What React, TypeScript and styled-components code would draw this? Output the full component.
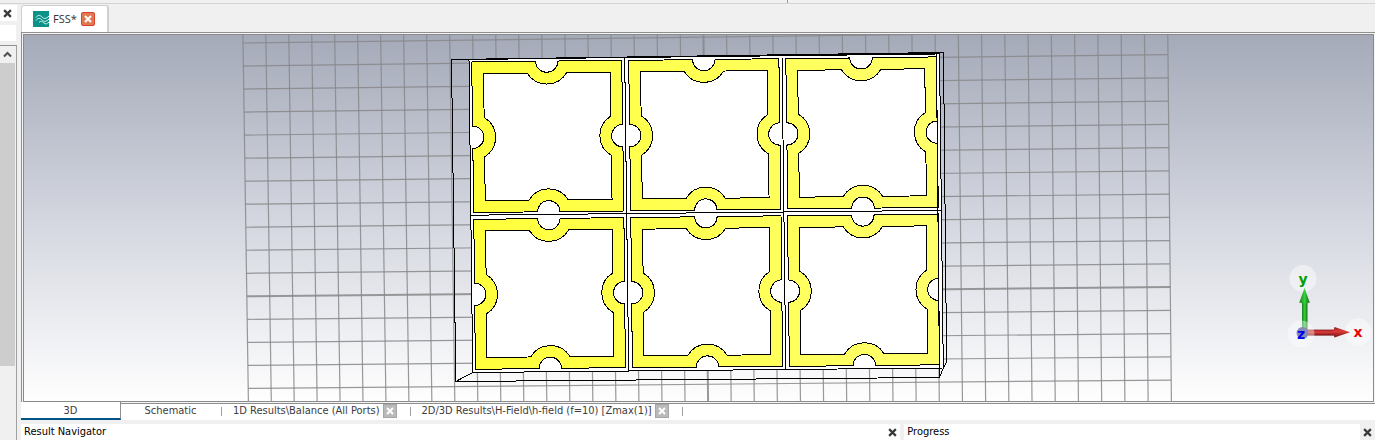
import React from "react";
import styled, { createGlobalStyle } from "styled-components";

const GlobalStyle = createGlobalStyle`
  *, *::before, *::after { box-sizing: border-box; }
  html, body, #root { margin: 0; height: 100%; }
  body {
    background: #f0f0f0;
    color: #000;
    font-family: "DejaVu Sans Condensed", "DejaVu Sans", sans-serif;
    font-size: 11px;
    line-height: 14px;
    overflow: hidden;
  }
  button { font: inherit; border: 0; padding: 0; margin: 0; background: none; color: inherit; }
  svg { display: block; }
`;

const Window = styled.div`
  display: flex;
  flex-direction: column;
  height: 100vh;
`;

const RibbonEdge = styled.div`
  height: 4px;
  flex: none;
  border-bottom: 1px solid #d4d4d4;
  display: flex;
  justify-content: center;
  padding-left: 200px;
`;

const SplitMark = styled.div`
  width: 1px;
  height: 3px;
  background: #a8a070;
`;

const Body = styled.div`
  flex: 1;
  min-height: 0;
  display: flex;
  gap: 4px;
`;

const Sidebar = styled.aside`
  width: 17px;
  flex: none;
  display: flex;
  flex-direction: column;
  padding-top: 1px;
  gap: 4px;
`;

const SidebarHead = styled.div`
  height: 16px;
  background: #fff;
  display: flex;
  align-items: center;
  justify-content: flex-end;
  padding-right: 3px;
`;

const SidebarField = styled.div`
  height: 16px;
  margin-right: 1px;
  background: #fff;
`;

const ScrollBox = styled.div`
  flex: 1;
  border-top: 1px solid #8f8f8f;
  border-right: 1px solid #a0a0a0;
  padding-right: 1px;
  display: flex;
  flex-direction: column;
`;

const ScrollButton = styled.button`
  height: 17px;
  display: flex;
  align-items: center;
  justify-content: center;
`;

const ScrollThumb = styled.div`
  height: 77%;
  background: #cdcdcd;
`;

const Main = styled.main`
  flex: 1;
  min-width: 0;
  display: flex;
  flex-direction: column;
`;

const DocTabs = styled.div`
  height: 28px;
  flex: none;
  display: flex;
  padding-top: 1px;
`;

const DocTab = styled.div`
  width: 88px;
  background: #fff;
  border: 1px solid #d0d0d0;
  border-right-width: 2px;
  border-bottom: 0;
  border-radius: 3px 3px 0 0;
  display: flex;
  align-items: center;
  padding-left: 11px;
  gap: 4px;
`;

const DocTitle = styled.span`
  width: 24px;
  font-family: "Noto Sans", sans-serif;
  font-size: 11px;
  color: #3c3c3c;
`;

const CloseBox = styled.button<{ $tone: "red" | "gray" }>`
  width: 14px;
  height: 14px;
  flex: none;
  display: flex;
  align-items: center;
  justify-content: center;
  color: #fff;
  border-radius: ${(p) => (p.$tone === "red" ? "2px" : "0")};
  border: 1px solid ${(p) => (p.$tone === "red" ? "#d8402c" : "#a6a6a6")};
  background: ${(p) => (p.$tone === "red" ? "#e07850" : "#bababa")};
`;

const ViewFrame = styled.section`
  flex: 1;
  min-height: 0;
  border: 1px solid #8f8f8f;
  border-right: 0;
  padding: 1px;
  background: #f4f4f4;
`;

const Viewport = styled.div`
  height: 100%;
  border: 1px solid #8a8a8a;
  background: linear-gradient(#a5aab9, #d3d6df 50%, #fefefe);
`;

const Scene = styled.svg`
  width: 100%;
  height: 100%;
`;

const ViewTabs = styled.nav`
  flex: none;
  height: 16px;
  display: flex;
  align-items: stretch;
  background: #fff;
`;

const ViewTab = styled.button<{ $active?: boolean }>`
  width: 100px;
  margin-top: ${(p) => (p.$active ? "-2px" : "0")};
  padding-top: ${(p) => (p.$active ? "2px" : "0")};
  padding-bottom: ${(p) => (p.$active ? "0" : "3px")};
  background: #fff;
  color: #3c3c3c;
  display: flex;
  align-items: center;
  justify-content: center;
  border-right: 1px solid ${(p) => (p.$active ? "#8f8f8f" : "transparent")};
  border-bottom: ${(p) => (p.$active ? "2px solid #005487" : "0")};
`;

const ResultTab = styled.div`
  display: flex;
  align-items: center;
  gap: 3px;
  padding: 0 13px 2px 0;
  color: #3c3c3c;
  white-space: nowrap;
`;

const Separator = styled.span`
  width: 1px;
  height: 9px;
  margin: 3px 11px 0 0;
  background: #a0a0a0;
`;

const Docks = styled.div`
  flex: none;
  display: flex;
  gap: 4px;
  padding-top: 4px;
`;

const Dock = styled.section<{ $grow: number }>`
  flex: ${(p) => p.$grow} 1 0;
  height: 16px;
  display: flex;
  align-items: center;
  justify-content: space-between;
  background: #fff;
  padding-left: 3px;
`;

const DockTitle = styled.h2`
  margin: 0;
  font-size: 11px;
  font-weight: 400;
  line-height: 16px;
`;

const PlainClose = styled.button<{ $shaded?: boolean }>`
  width: 15px;
  height: 16px;
  display: flex;
  align-items: center;
  justify-content: center;
  color: #3a3a3a;
  background: ${(p) => (p.$shaded ? "#f0f0f0" : "none")};
`;

const Cross = ({ size = 8, weight = 2 }: { size?: number; weight?: number }) => (
  <svg width={size} height={size} viewBox="0 0 8 8" aria-hidden="true">
    <path d="M1 1L7 7M7 1L1 7" stroke="currentColor" strokeWidth={weight} fill="none" />
  </svg>
);

const WaveLogo = () => (
  <svg width="16" height="16" viewBox="0 0 16 16" aria-hidden="true">
    <rect width="16" height="16" fill="#0b9389" />
    <g fill="none" stroke="#d5f3f0" strokeWidth="1">
      <path d="M3 6.500C5 3.500 7 4 9 6S13 8 16 5" />
      <path d="M3 9.500C5 6.500 7 7 9 9S13 11 16 8" />
      <path d="M6 11.500C8 9.500 9 10.500 11 12S14 13 16 11" />
    </g>
  </svg>
);

type Pt = [number, number];

const cells: [Pt, Pt, Pt, Pt][] = [
  [[471.7, 62], [621.7, 60.3], [623.9, 211], [473.7, 212.5]],
  [[628.7, 60.4], [778.9, 58.7], [780.9, 209.3], [630.7, 210.8]],
  [[785.8, 58.8], [936.3, 56.9], [938.3, 207.4], [787.8, 209]],
  [[473.8, 219.4], [623.9, 217.6], [625.4, 367.6], [475.4, 369.3]],
  [[630.8, 217.6], [781, 215.8], [782.6, 366.3], [632.4, 367.8]],
  [[787.5, 215.9], [938.3, 214], [939.4, 364.8], [789.4, 366.4]],
];

const NOTCH = 11.2;
const BUMP = 22.9;
const BAND = 11.7;

const lerp = (a: Pt, b: Pt, t: number): Pt => [a[0] + (b[0] - a[0]) * t, a[1] + (b[1] - a[1]) * t];
const dist = (a: Pt, b: Pt) => Math.hypot(b[0] - a[0], b[1] - a[1]);
const fmt = (p: Pt) => `${p[0].toFixed(2)} ${p[1].toFixed(2)}`;

// Closed loop through four corners with an arc of the given radius cut in the middle of each side.
const loop = (corners: Pt[], half: number, radius: number) => {
  let d = `M${fmt(corners[0])}`;
  corners.forEach((a, i) => {
    const b = corners[(i + 1) % 4];
    const t = half / dist(a, b);
    d += `L${fmt(lerp(a, b, 0.5 - t))}A${radius} ${radius} 0 0 0 ${fmt(lerp(a, b, 0.5 + t))}L${fmt(b)}`;
  });
  return d + "Z";
};

const inset = (c: Pt[]): Pt[] =>
  c.map((p, i) => {
    const next = c[(i + 1) % 4];
    const prev = c[(i + 3) % 4];
    const n = lerp(p, next, BAND / dist(p, next));
    const m = lerp(p, prev, BAND / dist(p, prev));
    return [n[0] + m[0] - p[0], n[1] + m[1] - p[1]] as Pt;
  });

const Ring = ({ corners }: { corners: Pt[] }) => (
  <path
    d={loop(corners, NOTCH, NOTCH) + loop(inset(corners), Math.sqrt(BUMP * BUMP - BAND * BAND), BUMP)}
    fill="url(#metal)"
    fillRule="evenodd"
    stroke="#000"
  />
);

const columns = Array.from({ length: 41 }, (_, i) => ({
  top: 242.9 + 22.93 * i + 0.0048 * i * i,
  bottom: 248.4 + 22.895 * i + 0.0045 * i * i,
  major: i === 20,
}));

const rows = Array.from({ length: 16 }, (_, j) => ({
  left: 43 + 23.03 * j,
  right: 31.3 + 23.25 * j,
  major: j === 11,
}));

const GroundGrid = () => (
  <g stroke="#87878a" strokeOpacity="0.85">
    {columns.map((c, i) => (
      <line key={i} x1={c.top} y1={35} x2={c.bottom} y2={401} strokeWidth={c.major ? 2 : 1.2} />
    ))}
    {rows.map((r, j) => (
      <line
        key={j}
        x1={243 + 0.35 * j}
        y1={r.left}
        x2={1167.7 + 0.23 * j}
        y2={r.right}
        strokeWidth={r.major ? 2 : 1.2}
      />
    ))}
  </g>
);

const Substrate = () => (
  <g fill="none" stroke="#000">
    <path d="M469 59.500L939.500 53.500L943.300 368L472.700 372.500Z" fill="#fff" />
    <path d="M624.700 57.500L628.700 371M782 56L785.800 369.500M470.500 215.200L941.500 210.400" />
    {cells.map((c, i) => (
      <Ring key={i} corners={c} />
    ))}
    <path d="M451.500 59.500L943.500 52.500L946.600 362L943.300 368L939.500 377.500L455.800 381.500Z" />
    <path d="M451.500 59.500L936.400 54L939.500 377.500M455.800 381.500L472.700 372.500" />
  </g>
);

const AxisTriad = () => (
  <g fontFamily='"DejaVu Sans", sans-serif' fontWeight="700" fontSize="14" textAnchor="middle">
    <g fill="#fff" fillOpacity="0.45">
      <circle cx="1303" cy="278.500" r="13.500" />
      <circle cx="1358" cy="332" r="13.500" />
    </g>
    <rect x="1302" y="302" width="5.500" height="29" fill="url(#green)" />
    <path d="M1304.500 288L1309.800 302.500Q1304.500 304.500 1299.300 302.500Z" fill="url(#green)" />
    <rect x="1306" y="329.600" width="29" height="6" fill="url(#red)" />
    <path d="M1350 332.300L1334.500 327Q1332.500 332 1334.500 337.500Z" fill="url(#red)" />
    <circle cx="1302.500" cy="333" r="6" fill="#3a3f8c" />
    <circle cx="1301" cy="334" r="13.500" fill="#fff" fillOpacity="0.4" />
    <text x="1303" y="284" fill="#00a000">y</text>
    <text x="1358" y="337" fill="#f00000">x</text>
    <text x="1301" y="339" fill="#0000f0">z</text>
  </g>
);

const ModelView = () => (
  <Scene viewBox="24 35 1349 366" role="img" aria-label="3D model">
    <defs>
      <linearGradient id="metal" gradientUnits="userSpaceOnUse" x1="470" y1="0" x2="940" y2="0">
        <stop offset="0" stopColor="#ffff3c" />
        <stop offset="1" stopColor="#ffff6c" />
      </linearGradient>
      <linearGradient id="green">
        <stop offset="0" stopColor="#1d7d22" />
        <stop offset="0.5" stopColor="#35d03d" />
        <stop offset="1" stopColor="#1a6a1e" />
      </linearGradient>
      <linearGradient id="red" x2="0" y2="1">
        <stop offset="0" stopColor="#8c1c1c" />
        <stop offset="0.4" stopColor="#e03c3c" />
        <stop offset="1" stopColor="#701414" />
      </linearGradient>
    </defs>
    <GroundGrid />
    <g shapeRendering="crispEdges">
      <Substrate />
    </g>
    <AxisTriad />
  </Scene>
);

const results = ["1D Results\\Balance (All Ports)", "2D/3D Results\\H-Field\\h-field (f=10) [Zmax(1)]"];

export default function App() {
  return (
    <>
      <GlobalStyle />
      <Window>
        <RibbonEdge>
          <SplitMark />
        </RibbonEdge>
        <Body>
          <Sidebar>
            <SidebarHead>
              <PlainClose aria-label="Close navigation panel">
                <Cross size={9} />
              </PlainClose>
            </SidebarHead>
            <SidebarField />
            <ScrollBox>
              <ScrollButton aria-label="Scroll up">
                <svg width="9" height="7" viewBox="0 0 9 7" aria-hidden="true">
                  <path d="M1 5.500L4.500 2L8 5.500" fill="none" stroke="#505050" strokeWidth="2" />
                </svg>
              </ScrollButton>
              <ScrollThumb />
            </ScrollBox>
          </Sidebar>
          <Main>
            <DocTabs>
              <DocTab>
                <WaveLogo />
                <DocTitle>FSS*</DocTitle>
                <CloseBox $tone="red" aria-label="Close FSS">
                  <Cross />
                </CloseBox>
              </DocTab>
            </DocTabs>
            <ViewFrame>
              <Viewport>
                <ModelView />
              </Viewport>
            </ViewFrame>
            <ViewTabs>
              <ViewTab $active>3D</ViewTab>
              <ViewTab>Schematic</ViewTab>
              <Separator />
              {results.map((label) => (
                <React.Fragment key={label}>
                  <ResultTab>
                    {label}
                    <CloseBox $tone="gray" aria-label={`Close ${label}`}>
                      <Cross />
                    </CloseBox>
                  </ResultTab>
                  <Separator />
                </React.Fragment>
              ))}
            </ViewTabs>
            <Docks>
              <Dock $grow={652}>
                <DockTitle>Result Navigator</DockTitle>
                <PlainClose aria-label="Close Result Navigator">
                  <Cross size={9} />
                </PlainClose>
              </Dock>
              <Dock $grow={348}>
                <DockTitle>Progress</DockTitle>
                <PlainClose $shaded aria-label="Close Progress">
                  <Cross size={9} />
                </PlainClose>
              </Dock>
            </Docks>
          </Main>
        </Body>
      </Window>
    </>
  );
}
